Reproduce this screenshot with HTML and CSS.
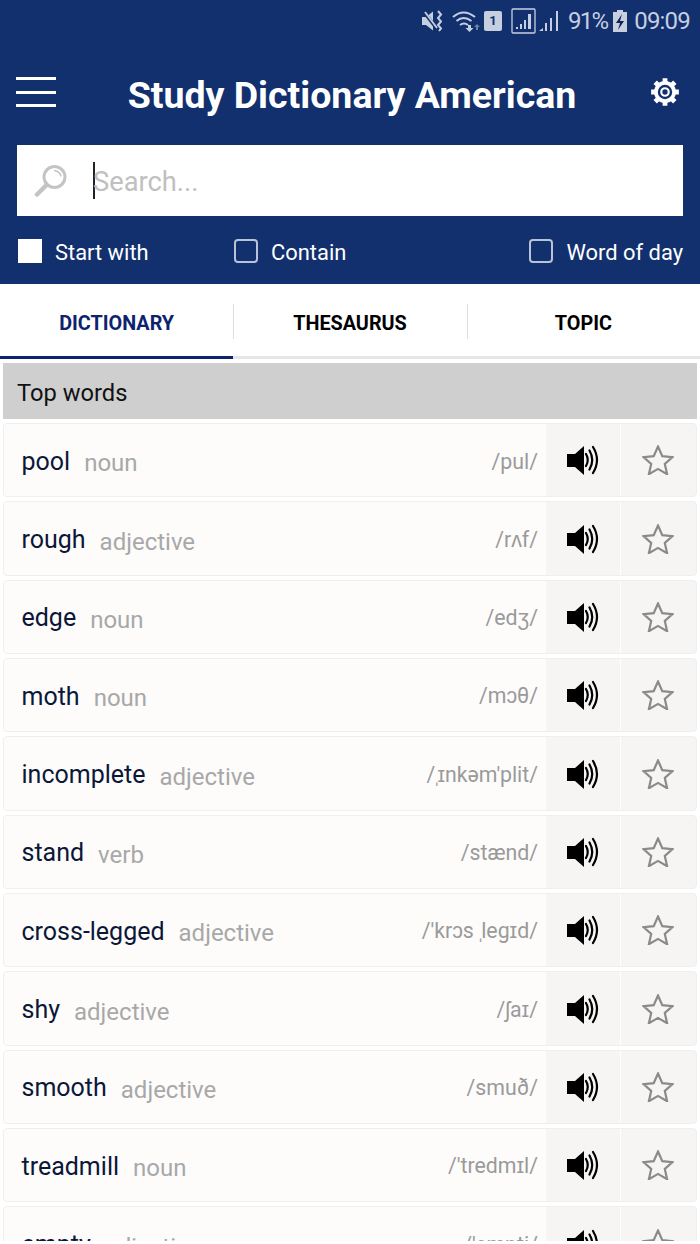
FILE: index.html
```html
<!DOCTYPE html>
<html lang="en">
<head>
    <meta charset="UTF-8">
    <meta name="viewport" content="width=device-width, initial-scale=1.0">
    <title>Study Dictionary American</title>
    <link rel="stylesheet" href="styles.css">
</head>
<body>

    <svg class="defs" width="0" height="0">
        <symbol id="speaker" viewBox="0 0 32 30">
            <path d="M0 9h8l9-8v29l-9-8h-8z" fill="#000"/>
            <path d="M19 9q3.500 6 0 12M22.500 5.500q5.500 9.500 0 19M26 2q8 13 0 26" fill="none" stroke="#000" stroke-width="2.200" stroke-linecap="round"/>
        </symbol>
        <symbol id="star" viewBox="0 0 32 30">
            <path d="M16 1.500l4.300 9.600 10.200 1-7.700 6.900 2.300 10.200-9.100-5.300-9.100 5.300 2.300-10.200-7.700-6.900 10.200-1z" fill="none" stroke="#8a8a8a" stroke-width="2.200"/>
        </symbol>
    </svg>

    <div id="screen">
        <header class="top">
            <div class="status">
                <svg class="st-icon st-mute" width="22" height="22" viewBox="0 0 22 22">
                    <path d="M0 7h4l7-5.500v19l-7-5.500h-4z" fill="#c6cfe0"/>
                    <path d="M2 2l13 17" stroke="#12306e" stroke-width="3.500"/>
                    <path d="M3 2l12 16" stroke="#c6cfe0" stroke-width="1.800"/>
                    <path d="M16 1l3 3.500-3 3.500 3 3.500-3 3.500 3 3.500-2 2.500" fill="none" stroke="#c6cfe0" stroke-width="2"/>
                </svg>
                <svg class="st-icon st-wifi" width="28" height="22" viewBox="0 0 28 22">
                    <path d="M1 7q10.500-9 22 0M4.500 11q7-6 15 0M8 15q4-3 8 0" fill="none" stroke="#c6cfe0" stroke-width="2"/>
                    <path d="M16 15h3v3h2.500l-4 4-4-4h2.500z" fill="#c6cfe0"/>
                    <path d="M24 20v-3h-2l3-3 3 3h-2v3z" fill="#6f82a8"/>
                </svg>
                <span class="sim">1</span>
                <svg class="st-icon st-box" width="25" height="26" viewBox="0 0 25 26">
                    <rect x="1" y="1" width="23" height="24" rx="1" fill="none" stroke="#c6cfe0" stroke-width="1.300"/>
                    <path d="M5 21h2v-2h-2z M9 21h2v-5h-2z M13 21h2v-9h-2z M17 21h3v-15h-3z" fill="#c6cfe0"/>
                </svg>
                <svg class="st-icon st-signal" width="20" height="22" viewBox="0 0 20 22">
                    <path d="M0 21l4-3v3z" fill="#c6cfe0"/>
                    <path d="M6 21h2v-8h-2z M11 21h2v-13h-2z M17 21h2v-20h-2z" fill="#c6cfe0"/>
                </svg>
                <span class="st-text st-pct">91%</span>
                <svg class="st-icon st-batt" width="14" height="22" viewBox="0 0 14 22">
                    <path d="M4 0h6v2h4v20h-14v-20h4z" fill="#c6cfe0"/>
                    <path d="M9 4l-6 9h4l-2 7 6-9h-4z" fill="#0f2350"/>
                </svg>
                <span class="st-text st-time">09:09</span>
            </div>

            <div class="title-row">
                <div class="menu-icon"><span></span><span></span><span></span></div>
                <h1>Study Dictionary American</h1>
                <svg class="gear" width="32" height="32" viewBox="0 0 30 30">
                    <circle cx="15" cy="15" r="8.500" fill="none" stroke="#fff" stroke-width="3.500"/>
                    <circle cx="15" cy="15" r="3.500" fill="none" stroke="#fff" stroke-width="2"/>
                    <path d="M15 2v5M15 23v5M2 15h5M23 15h5M5.800 5.800l3.500 3.500M20.700 20.700l3.500 3.500M24.200 5.800l-3.500 3.500M9.300 20.700l-3.500 3.500" stroke="#fff" stroke-width="4.500"/>
                </svg>
            </div>

            <div class="search">
                <svg class="search-icon" width="34" height="34" viewBox="0 0 34 34">
                    <circle cx="20.500" cy="13" r="10.500" fill="none" stroke="#c4c4c4" stroke-width="3"/>
                    <path d="M20 6.500a7 7 0 0 1 7 6" fill="none" stroke="#c4c4c4" stroke-width="1.500"/>
                    <path d="M12.500 21l-9.500 9.500" stroke="#c4c4c4" stroke-width="4.500" stroke-linecap="round"/>
                </svg>
                <span class="caret"></span>
                <span class="placeholder">Search...</span>
            </div>

            <div class="filters">
                <label class="filter filter-start"><span class="box box-on"></span>Start with</label>
                <label class="filter filter-contain"><span class="box"></span>Contain</label>
                <label class="filter"><span class="box"></span>Word of day</label>
            </div>
        </header>

        <nav class="tabs">
            <div class="tab tab-active">DICTIONARY</div>
            <div class="tab">THESAURUS</div>
            <div class="tab">TOPIC</div>
        </nav>

        <div class="section-title">Top words</div>

        <div class="list">
            <div class="row">
                <div class="entry"><span class="word">pool</span><span class="pos">noun</span><span class="ipa">/pul/</span></div>
                <div class="btn"><svg class="speaker"><use href="#speaker"/></svg></div>
                <div class="btn"><svg class="star"><use href="#star"/></svg></div>
            </div>
            <div class="row">
                <div class="entry"><span class="word">rough</span><span class="pos">adjective</span><span class="ipa">/rʌf/</span></div>
                <div class="btn"><svg class="speaker"><use href="#speaker"/></svg></div>
                <div class="btn"><svg class="star"><use href="#star"/></svg></div>
            </div>
            <div class="row">
                <div class="entry"><span class="word">edge</span><span class="pos">noun</span><span class="ipa">/edʒ/</span></div>
                <div class="btn"><svg class="speaker"><use href="#speaker"/></svg></div>
                <div class="btn"><svg class="star"><use href="#star"/></svg></div>
            </div>
            <div class="row">
                <div class="entry"><span class="word">moth</span><span class="pos">noun</span><span class="ipa">/mɔθ/</span></div>
                <div class="btn"><svg class="speaker"><use href="#speaker"/></svg></div>
                <div class="btn"><svg class="star"><use href="#star"/></svg></div>
            </div>
            <div class="row">
                <div class="entry"><span class="word">incomplete</span><span class="pos">adjective</span><span class="ipa">/<span class="stress">ˌ</span>ɪnkəm'plit/</span></div>
                <div class="btn"><svg class="speaker"><use href="#speaker"/></svg></div>
                <div class="btn"><svg class="star"><use href="#star"/></svg></div>
            </div>
            <div class="row">
                <div class="entry"><span class="word">stand</span><span class="pos">verb</span><span class="ipa">/stænd/</span></div>
                <div class="btn"><svg class="speaker"><use href="#speaker"/></svg></div>
                <div class="btn"><svg class="star"><use href="#star"/></svg></div>
            </div>
            <div class="row">
                <div class="entry"><span class="word">cross-legged</span><span class="pos">adjective</span><span class="ipa">/'krɔs <span class="stress">ˌ</span>legɪd/</span></div>
                <div class="btn"><svg class="speaker"><use href="#speaker"/></svg></div>
                <div class="btn"><svg class="star"><use href="#star"/></svg></div>
            </div>
            <div class="row">
                <div class="entry"><span class="word">shy</span><span class="pos">adjective</span><span class="ipa">/ʃaɪ/</span></div>
                <div class="btn"><svg class="speaker"><use href="#speaker"/></svg></div>
                <div class="btn"><svg class="star"><use href="#star"/></svg></div>
            </div>
            <div class="row">
                <div class="entry"><span class="word">smooth</span><span class="pos">adjective</span><span class="ipa">/smuð/</span></div>
                <div class="btn"><svg class="speaker"><use href="#speaker"/></svg></div>
                <div class="btn"><svg class="star"><use href="#star"/></svg></div>
            </div>
            <div class="row">
                <div class="entry"><span class="word">treadmill</span><span class="pos">noun</span><span class="ipa">/'tredmɪl/</span></div>
                <div class="btn"><svg class="speaker"><use href="#speaker"/></svg></div>
                <div class="btn"><svg class="star"><use href="#star"/></svg></div>
            </div>
            <div class="row">
                <div class="entry"><span class="word">empty</span><span class="pos">adjective</span><span class="ipa">/'empti/</span></div>
                <div class="btn"><svg class="speaker"><use href="#speaker"/></svg></div>
                <div class="btn"><svg class="star"><use href="#star"/></svg></div>
            </div>
        </div>
    </div>

</body>
</html>
```

FILE: styles.css
```css
body {
    margin: 0;
    padding: 0;
    background-color: #fff;
    font-family: Roboto, "Liberation Sans", sans-serif;
}

.defs {
    position: absolute;
}

#screen {
    width: 700px;
    height: 1241px;
    overflow: hidden;
    background-color: #fff;
}

.top {
    height: 284px;
    background-color: #12306e;
}

.status {
    height: 42px;
    padding-right: 10px;
    display: flex;
    align-items: center;
    justify-content: flex-end;
    box-sizing: border-box;
}

.st-icon {
    flex: none;
}

.st-mute {
    margin-right: 8px;
}

.st-wifi {
    margin-right: 4px;
}

.st-box {
    margin-right: 3px;
}

.st-signal {
    margin-right: 9px;
}

.st-batt {
    margin-right: 7px;
}

.st-text {
    color: #c6cfe0;
    font-size: 24px;
}

.st-pct {
    margin-right: 6px;
    letter-spacing: -1.800px;
}

.st-time {
    letter-spacing: -0.800px;
}

.sim {
    width: 18px;
    height: 20px;
    margin-right: 9px;
    border-radius: 2px;
    background-color: #c6cfe0;
    color: #12306e;
    font-size: 13px;
    font-weight: 700;
    line-height: 20px;
    text-align: center;
}

.title-row {
    height: 103px;
    padding: 0 19px 0 16px;
    display: flex;
    align-items: center;
    justify-content: space-between;
}

.title-row h1 {
    margin: 0 1px 0 0;
    padding-top: 2px;
    color: #fff;
    font-size: 37.500px;
    font-weight: 700;
    white-space: nowrap;
}

.menu-icon {
    width: 40px;
    margin-bottom: 3px;
    display: flex;
    flex-direction: column;
    gap: 10.500px;
}

.menu-icon span {
    display: block;
    height: 3px;
    background-color: #fff;
}

.gear {
    margin-bottom: 3px;
}

.search {
    height: 71px;
    margin: 0 17px;
    display: flex;
    align-items: center;
    background-color: #fff;
}

.search-icon {
    margin-left: 17px;
    flex: none;
}

.caret {
    width: 2px;
    height: 37px;
    margin-left: 25px;
    background-color: #222;
}

.placeholder {
    margin-left: -2px;
    padding-top: 3px;
    color: #c0c0c0;
    font-size: 27.300px;
}

.filters {
    height: 68px;
    padding: 5px 17px 0 18px;
    display: flex;
    align-items: center;
    box-sizing: border-box;
}

.filter {
    display: flex;
    align-items: center;
    gap: 13px;
    color: #fff;
    font-size: 21.900px;
}

.filter-start {
    width: 216px;
}

.filter-contain {
    margin-right: auto;
}

.box {
    width: 24px;
    height: 24px;
    margin-top: -4px;
    border: 2px solid #b9c3d8;
    border-radius: 4px;
    box-sizing: border-box;
}

.box-on {
    background-color: #fff;
    border-color: #fff;
    border-radius: 0;
}

.tabs {
    height: 75px;
    display: flex;
    border-bottom: 3px solid #e6e6e6;
    box-sizing: border-box;
}

.tab {
    position: relative;
    flex: 1;
    height: 75px;
    padding-top: 3px;
    box-sizing: border-box;
    display: flex;
    align-items: center;
    justify-content: center;
    color: #000;
    font-size: 19.800px;
    font-weight: 700;
}

.tab + .tab::before {
    content: "";
    position: absolute;
    left: 0;
    top: 20px;
    width: 1px;
    height: 35px;
    background-color: #dedede;
}

.tab-active {
    color: #0d2370;
    border-bottom: 3px solid #0d2370;
    padding-top: 6px;
}

.section-title {
    height: 56px;
    margin: 4px 3px 4px;
    padding: 3px 0 0 14px;
    box-sizing: border-box;
    display: flex;
    align-items: center;
    background-color: #cfcfcf;
    color: #111;
    font-size: 23.700px;
}

.list {
    margin: 0 3px;
}

.row {
    height: 74.350px;
    margin-bottom: 4px;
    display: flex;
    border: 1px solid #efefef;
    border-radius: 4px;
    box-sizing: border-box;
    overflow: hidden;
    background-color: #f6f5f4;
}

.entry {
    flex: 1;
    min-width: 0;
    padding: 2px 8px 0 17.500px;
    display: flex;
    align-items: center;
    background-color: #fdfcfb;
}

.word {
    color: #0b1738;
    font-size: 25px;
}

.pos {
    margin-left: 14px;
    padding-top: 4px;
    color: #a8a8a8;
    font-size: 24px;
}

.ipa {
    margin-left: auto;
    color: #9a9a9a;
    font-size: 21.300px;
}

.stress {
    margin-left: -2px;
    letter-spacing: -3px;
}

.btn {
    flex: none;
    width: 74px;
    display: flex;
    align-items: center;
    justify-content: center;
}

.btn + .btn {
    width: 76px;
    padding-right: 2px;
    border-left: 1px solid #fff;
    box-sizing: border-box;
}

.speaker,
.star {
    width: 32px;
    height: 30px;
}
```
